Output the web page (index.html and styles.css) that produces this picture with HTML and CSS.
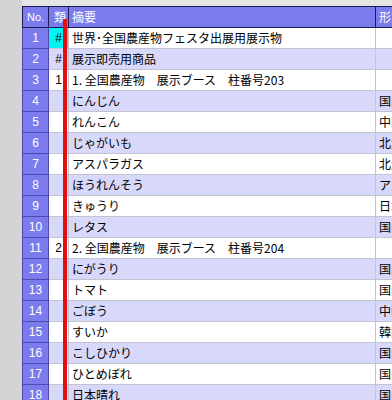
FILE: index.html
```html
<!DOCTYPE html>
<html lang="ja">
<head>
<meta charset="utf-8">
<link rel="stylesheet" href="styles.css">
</head>
<body>
<div class="frame">
  <div class="sheet">
    <table class="grid">
      <colgroup>
        <col class="c-no"><col class="c-kind"><col class="c-desc"><col class="c-form">
      </colgroup>
      <thead>
        <tr><th class="no">No.</th><th>類</th><th class="left">摘要</th><th class="left">形態</th></tr>
      </thead>
      <tbody>
        <tr class="odd"><td class="no">1</td><td class="kind cyan">#</td><td>世界･全国農産物フェスタ出展用展示物</td><td></td></tr>
        <tr class="even"><td class="no">2</td><td class="kind">#</td><td>展示即売用商品</td><td></td></tr>
        <tr class="odd"><td class="no">3</td><td class="kind">1</td><td>1. 全国農産物　展示ブース　柱番号203</td><td></td></tr>
        <tr class="even"><td class="no">4</td><td class="kind"></td><td>にんじん</td><td>国内産</td></tr>
        <tr class="odd"><td class="no">5</td><td class="kind"></td><td>れんこん</td><td>中国産</td></tr>
        <tr class="even"><td class="no">6</td><td class="kind"></td><td>じゃがいも</td><td>北海道</td></tr>
        <tr class="odd"><td class="no">7</td><td class="kind"></td><td>アスパラガス</td><td>北海道</td></tr>
        <tr class="even"><td class="no">8</td><td class="kind"></td><td>ほうれんそう</td><td>アメリカ</td></tr>
        <tr class="odd"><td class="no">9</td><td class="kind"></td><td>きゅうり</td><td>日本産</td></tr>
        <tr class="even"><td class="no">10</td><td class="kind"></td><td>レタス</td><td>国内産</td></tr>
        <tr class="odd"><td class="no">11</td><td class="kind">2</td><td>2. 全国農産物　展示ブース　柱番号204</td><td></td></tr>
        <tr class="even"><td class="no">12</td><td class="kind"></td><td>にがうり</td><td>国内産</td></tr>
        <tr class="odd"><td class="no">13</td><td class="kind"></td><td>トマト</td><td>国内産</td></tr>
        <tr class="even"><td class="no">14</td><td class="kind"></td><td>ごぼう</td><td>中国産</td></tr>
        <tr class="odd"><td class="no">15</td><td class="kind"></td><td>すいか</td><td>韓国産</td></tr>
        <tr class="even"><td class="no">16</td><td class="kind"></td><td>こしひかり</td><td>国内産</td></tr>
        <tr class="odd"><td class="no">17</td><td class="kind"></td><td>ひとめぼれ</td><td>国内産</td></tr>
        <tr class="even"><td class="no">18</td><td class="kind"></td><td>日本晴れ</td><td>国内産</td></tr>
      </tbody>
    </table>
    <div class="marker"></div>
  </div>
</div>
</body>
</html>
```

FILE: styles.css
```css
html, body {
  margin: 0;
  padding: 0;
  background: #d6d6d6;
  overflow: hidden;
}
.frame {
  width: 392px;
  height: 400px;
  overflow: hidden;
  padding: 6px 0 0 22px;
  box-sizing: border-box;
  background: #e4e4e4;
  border-left: 0;
  background-image: linear-gradient(to right, #d4d4d4 0, #d4d4d4 22px, transparent 22px);
}
.sheet {
  position: relative;
  width: 480px;
}
.grid {
  border-collapse: collapse;
  table-layout: fixed;
  width: 460px;
  font-family: "Noto Sans CJK JP", "Liberation Sans", sans-serif;
  font-size: 12px;
  color: #000;
}
.c-no { width: 26px; }
.c-kind { width: 20px; }
.c-desc { width: 307px; }
.c-form { width: 107px; }
.grid th, .grid td {
  height: 20px;
  padding: 0 0 0 3px;
  line-height: 20px;
  white-space: nowrap;
  overflow: hidden;
  border: 1px solid #c4c4d0;
  box-sizing: border-box;
}
.grid thead th {
  background: #7b7bee;
  color: #fff;
  font-weight: normal;
  border: 1px solid #1a1a50;
  text-align: center;
}
.grid thead th.left { text-align: left; }
.grid td.no {
  background: #7b7bee;
  color: #fff;
  text-align: center;
  padding: 0;
  border-color: #4a4ab0;
  font-family: "Liberation Sans", sans-serif;
}
.grid thead th.no {
  font-family: "Liberation Sans", sans-serif;
  font-size: 11px;
  padding: 0;
}
.grid td.kind {
  text-align: center;
  padding: 0;
  font-family: "Liberation Sans", sans-serif;
}
.odd td { background: #ffffff; }
.even td { background: #d8d8fa; }
.grid td.cyan { background: #00f4f4; }
.marker {
  position: absolute;
  left: 41px;
  top: 13px;
  width: 4px;
  height: 400px;
  background: #e01010;
}
```
